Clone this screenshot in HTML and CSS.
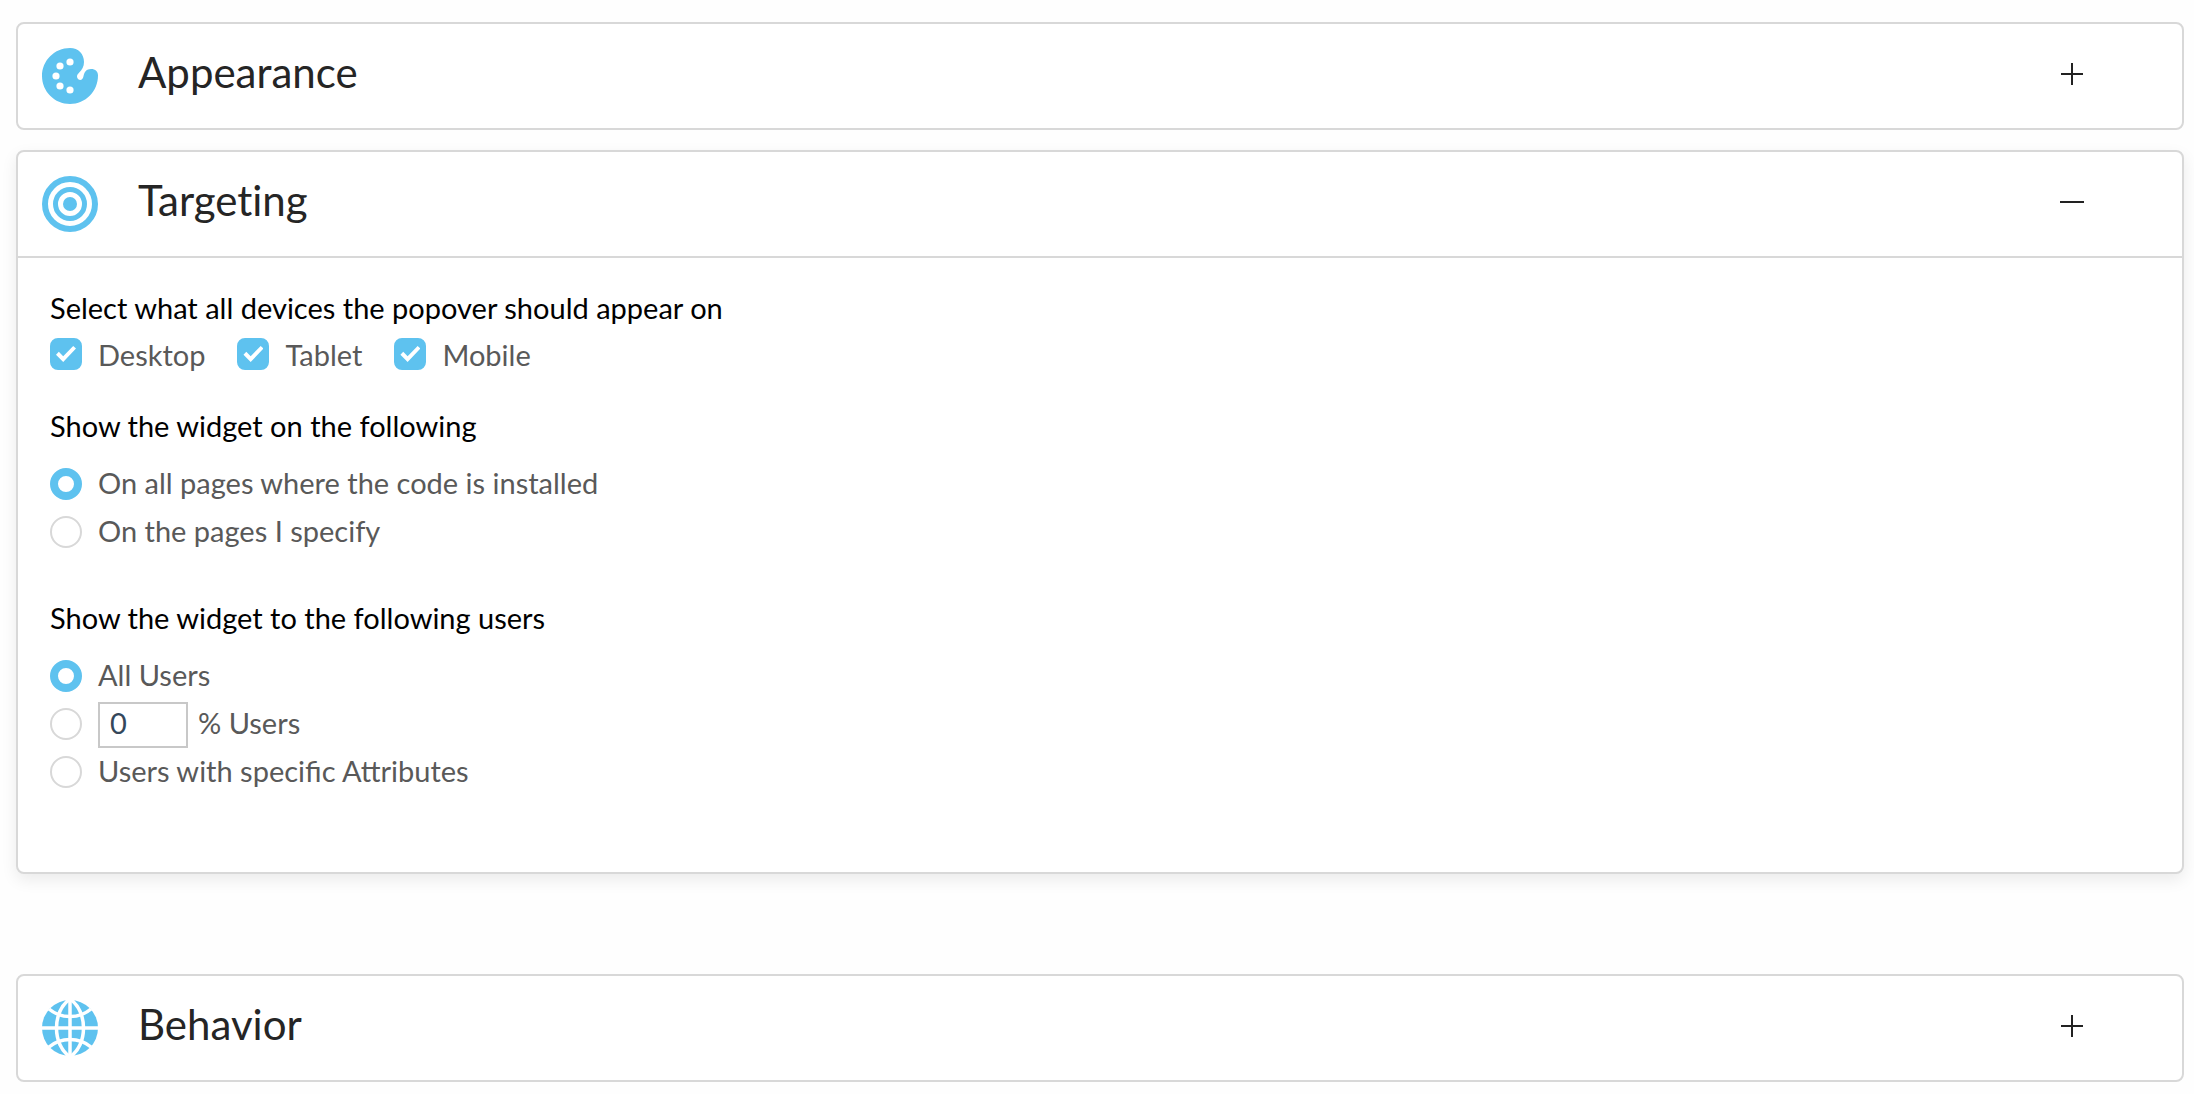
FILE: index.html
```html
<!DOCTYPE html>
<html lang="en">
<head>
    <meta charset="UTF-8">
    <meta name="viewport" content="width=device-width, initial-scale=1.0">
    <title>Popover settings</title>
    <link rel="stylesheet" href="styles.css">
</head>
<body>
    <main class="settings">
        <section class="panel">
            <h2 class="panel-heading">
                <button type="button" class="panel-header" aria-expanded="false">
                    <svg class="panel-icon" viewBox="0 0 56 56" aria-hidden="true">
                        <path fill="#5ec2ef" d="M28 0C12.500 0 0 12.500 0 28s12.500 28 28 28 28-12.500 28-28.500C56 23.500 53.500 21 49 21c-4.500 0-6.300 2.800-7.300 6.300-.6 2.700-1.200 4.700-3.200 4.700-2 0-3.500-1.600-3.500-3.500 0-1.500.8-2.500 2-3.700C40 22 42 18.500 42 14 42 6 36.500 0 28 0z"/>
                        <g fill="#fff">
                            <circle cx="28" cy="14" r="3.600"/>
                            <circle cx="18" cy="18" r="3.600"/>
                            <circle cx="14" cy="28" r="3.600"/>
                            <circle cx="18" cy="38" r="3.600"/>
                            <circle cx="28" cy="42" r="3.600"/>
                        </g>
                    </svg>
                    <span class="panel-title">Appearance</span>
                    <svg class="panel-toggle" viewBox="0 0 24 24" aria-hidden="true">
                        <path d="M1 12h22M12 1v22"/>
                    </svg>
                </button>
            </h2>
        </section>

        <section class="panel panel-open">
            <h2 class="panel-heading">
                <button type="button" class="panel-header" aria-expanded="true" aria-controls="targeting">
                    <svg class="panel-icon" viewBox="0 0 56 56" aria-hidden="true">
                        <g fill="none" stroke="#5ec2ef">
                            <circle cx="28" cy="28" r="25" stroke-width="6"/>
                            <circle cx="28" cy="28" r="14.500" stroke-width="5"/>
                        </g>
                        <circle cx="28" cy="28" r="7" fill="#5ec2ef"/>
                    </svg>
                    <span class="panel-title">Targeting</span>
                    <svg class="panel-toggle" viewBox="0 0 24 24" aria-hidden="true">
                        <path d="M0 12h24"/>
                    </svg>
                </button>
            </h2>

            <div class="panel-body" id="targeting">
                <div class="group" role="group" aria-labelledby="devices-label">
                    <p class="group-label" id="devices-label">Select what all devices the popover should appear on</p>
                    <div class="check-row">
                        <label class="option"><input type="checkbox" class="checkbox" checked> Desktop</label>
                        <label class="option"><input type="checkbox" class="checkbox" checked> Tablet</label>
                        <label class="option"><input type="checkbox" class="checkbox" checked> Mobile</label>
                    </div>
                </div>

                <div class="group" role="radiogroup" aria-labelledby="pages-label">
                    <p class="group-label" id="pages-label">Show the widget on the following</p>
                    <div class="radio-list">
                        <label class="option"><input type="radio" class="radio" name="pages" checked> On all pages where the code is installed</label>
                        <label class="option"><input type="radio" class="radio" name="pages"> On the pages I specify</label>
                    </div>
                </div>

                <div class="group" role="radiogroup" aria-labelledby="users-label">
                    <p class="group-label" id="users-label">Show the widget to the following users</p>
                    <div class="radio-list">
                        <label class="option"><input type="radio" class="radio" name="users" checked> All Users</label>
                        <div class="option">
                            <input type="radio" class="radio" name="users" id="percent-users" aria-label="Percentage of users">
                            <input type="text" class="percent" id="percent" value="0">
                            <label class="percent-label" for="percent">% Users</label>
                        </div>
                        <label class="option"><input type="radio" class="radio" name="users"> Users with specific Attributes</label>
                    </div>
                </div>
            </div>
        </section>

        <section class="panel">
            <h2 class="panel-heading">
                <button type="button" class="panel-header" aria-expanded="false">
                    <svg class="panel-icon" viewBox="0 0 56 56" aria-hidden="true">
                        <circle cx="28" cy="28" r="28" fill="#5ec2ef"/>
                        <g fill="none" stroke="#fff" stroke-width="3.500">
                            <path d="M28 0v56M0 28h56"/>
                            <path d="M28-1C10 11 10 45 28 57M28-1c18 12 18 46 0 58"/>
                            <path d="M7 9c12 10 30 10 42 0M7 47c12-10 30-10 42 0"/>
                        </g>
                    </svg>
                    <span class="panel-title">Behavior</span>
                    <svg class="panel-toggle" viewBox="0 0 24 24" aria-hidden="true">
                        <path d="M1 12h22M12 1v22"/>
                    </svg>
                </button>
            </h2>
        </section>
    </main>
</body>
</html>
```
FILE: styles.css
```css
* {
    box-sizing: border-box;
}
body {
    margin: 0;
    background-color: #fefefe;
    color: #000;
    font-family: Lato, "Open Sans", sans-serif;
    font-size: 29px;
}
.settings {
    display: flex;
    flex-direction: column;
    gap: 20px;
    padding: 22px 10px 12px 16px;
}

/* panels */
.panel {
    background-color: #fff;
    border: 2px solid #d8d8d8;
    border-radius: 8px;
}
.panel-open {
    margin-bottom: 80px;
    box-shadow: 0 6px 16px rgba(0, 0, 0, 0.08);
}
.panel-heading {
    margin: 0;
}
.panel-header {
    display: flex;
    align-items: center;
    width: 100%;
    height: 104px;
    padding: 0 98px 0 24px;
    border: 0;
    background: none;
    color: #252525;
    font-family: inherit;
    text-align: left;
    cursor: pointer;
}
.panel-icon {
    width: 56px;
    height: 56px;
    margin-right: 40px;
}
.panel-title {
    flex: 1;
    padding-bottom: 8px;
    font-size: 42px;
    line-height: 48px;
    font-variant-ligatures: none;
}
.panel-toggle {
    width: 24px;
    height: 24px;
    margin-bottom: 4px;
    stroke: #222;
    stroke-width: 2;
}
.panel-body {
    display: flex;
    flex-direction: column;
    padding: 30px 32px 78px;
    border-top: 2px solid #d8d8d8;
}

/* option groups */
.group + .group {
    margin-top: 28px;
}
.group[role="radiogroup"] + .group {
    margin-top: 44px;
}
.group-label {
    margin: 0;
    line-height: 40px;
}
.check-row {
    display: flex;
    gap: 32px;
    margin-top: 2px;
}
.radio-list {
    margin-top: 12px;
}
.option {
    display: flex;
    align-items: center;
    gap: 16px;
    height: 48px;
    color: #595959;
}
.checkbox,
.radio {
    appearance: none;
    flex: none;
    display: grid;
    place-content: center;
    width: 32px;
    height: 32px;
    margin: 0;
    border: 2px solid #d8d8d8;
    background-color: #fff;
}
.checkbox {
    border-radius: 8px;
}
.checkbox:checked {
    border-color: #5ec2ef;
    background-color: #5ec2ef;
}
.checkbox:checked::before {
    content: "";
    width: 20px;
    height: 16px;
    background-color: #fff;
    clip-path: polygon(0 54%, 14% 36%, 36% 64%, 86% 0, 100% 16%, 36% 100%);
}
.radio {
    margin-top: 4px;
    border-radius: 50%;
}
.radio:checked {
    border: 8px solid #5ec2ef;
}
.percent {
    width: 90px;
    height: 46px;
    margin-top: 6px;
    padding: 0 10px 6px;
    border: 2px solid #c8c8c8;
    background-color: #fff;
    color: #34475b;
    font-family: inherit;
    font-size: 29px;
}
.percent-label {
    margin-left: -6px;
}
```
